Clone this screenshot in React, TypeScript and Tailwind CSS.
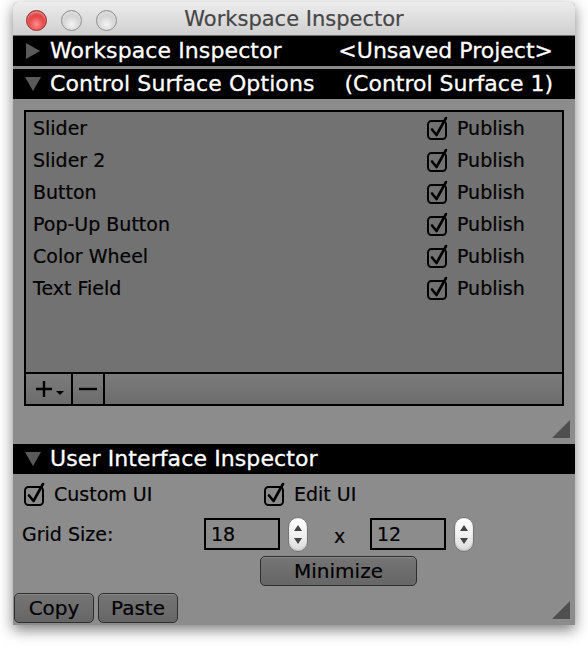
import React from 'react'

const FONT = { fontFamily: '"DejaVu Sans", Verdana, sans-serif' }

const ITEMS = ['Slider', 'Slider 2', 'Button', 'Pop-Up Button', 'Color Wheel', 'Text Field']

function CheckBox() {
    return (
        <svg width="22" height="25" viewBox="0 0 22 25" className="shrink-0">
            <rect x="1" y="5" width="18" height="18" rx="3.5" fill="none" stroke="#000" strokeWidth="2" />
            <path d="M5 13.5 L9.5 19 L19 2" fill="none" stroke="#000" strokeWidth="2.6" strokeLinecap="round" strokeLinejoin="round" />
        </svg>
    )
}

function Disclosure({ open }: { open: boolean }) {
    return open ? (
        <svg width="18" height="16" viewBox="0 0 18 16"><path d="M1 1 H17 L9 15 Z" fill="#5a5a5a" /></svg>
    ) : (
        <svg width="16" height="18" viewBox="0 0 16 18"><path d="M1 1 V17 L15 9 Z" fill="#5a5a5a" /></svg>
    )
}

function Header({ open, title, right }: { open: boolean; title: string; right?: string }) {
    return (
        <div className="h-[30px] bg-black flex items-center text-white text-[22px] leading-none pr-[22px] [-webkit-text-stroke:0.3px_white]">
            <div className="w-[37px] flex justify-center pl-[3px]">
                <Disclosure open={open} />
            </div>
            <span className="tracking-[0.1px]">{title}</span>
            {right && <span className="ml-auto">{right}</span>}
        </div>
    )
}

function ResizeGrip() {
    return (
        <svg width="18" height="18" viewBox="0 0 18 18"><path d="M18 0 V18 H0 Z" fill="#4f4f4f" /></svg>
    )
}

function Stepper() {
    return (
        <div className="ml-[8px] w-[20px] h-[35px] rounded-full border border-[#777] bg-gradient-to-b from-white via-[#f1f1f1] to-[#dcdcdc] flex flex-col items-center justify-between py-[7px] shadow-[inset_0_-1px_2px_rgba(0,0,0,0.15)]">
            <svg width="8" height="6" viewBox="0 0 8 6"><path d="M4 0 L8 6 H0 Z" fill="#444" /></svg>
            <svg width="8" height="6" viewBox="0 0 8 6"><path d="M0 0 H8 L4 6 Z" fill="#444" /></svg>
        </div>
    )
}

function Field({ value }: { value: string }) {
    return (
        <div className="w-[76px] h-[32px] border-2 border-black flex items-center pl-[5px] text-[19px] text-black">
            {value}
        </div>
    )
}

function Btn({ label, className }: { label: string; className: string }) {
    return (
        <div className={`h-[30px] rounded-[5px] border-[1.5px] border-[#2e2e2e] bg-gradient-to-b from-[#757575] to-[#666] flex items-center justify-center text-[20px] text-black shadow-[inset_0_1px_0_rgba(255,255,255,0.15)] ${className}`}>
            {label}
        </div>
    )
}

export default function App() {
    return (
        <div className="w-[588px] h-[646px] bg-white pt-[2px]" style={FONT}>
            <div className="ml-[13px] w-[562px] rounded-t-[5px] overflow-hidden bg-[#8c8c8c] shadow-[0_5px_14px_rgba(0,0,0,0.5)]">
                {/* Title bar */}
                <div className="h-[34px] relative flex items-center justify-center bg-gradient-to-b from-[#ededed] to-[#cfcfcf] border-b border-[#6d6d6d]">
                    <div className="absolute left-[13px] top-[8px] flex gap-[14px]">
                        <div className="w-[21px] h-[21px] rounded-full border border-[#9c2a2a] bg-[radial-gradient(circle_at_50%_70%,#ff8d8d,#e23b3b_55%,#b51c1c)] shadow-[inset_0_2px_3px_rgba(255,255,255,0.5)]" />
                        <div className="w-[21px] h-[21px] rounded-full border border-[#8e8e8e] bg-[radial-gradient(circle_at_50%_70%,#f4f4f4,#cfcfcf_60%,#a9a9a9)] shadow-[inset_0_2px_3px_rgba(255,255,255,0.6)]" />
                        <div className="w-[21px] h-[21px] rounded-full border border-[#8e8e8e] bg-[radial-gradient(circle_at_50%_70%,#f4f4f4,#cfcfcf_60%,#a9a9a9)] shadow-[inset_0_2px_3px_rgba(255,255,255,0.6)]" />
                    </div>
                    <span className="text-[21px] text-[#464646] leading-none pt-[2px] [-webkit-text-stroke:0.2px_#464646]">Workspace Inspector</span>
                </div>

                <Header open={false} title="Workspace Inspector" right="<Unsaved Project>" />
                <div className="h-[3px] bg-[#8a8a8a]" />
                <Header open={true} title="Control Surface Options" right="(Control Surface 1)" />

                {/* Control list */}
                <div className="pt-[11px] pl-[11px] pr-[11px]">
                    <div className="border-2 border-black bg-[#727272]">
                        <div className="h-[260px]">
                            {ITEMS.map(item => (
                                <div key={item} className="h-[32px] flex items-center pl-[7px] pr-[10px] text-[19px] text-black [-webkit-text-stroke:0.2px_black]">
                                    <span>{item}</span>
                                    <div className="ml-auto w-[125px] flex items-center gap-[8px]">
                                        <CheckBox />
                                        <span>Publish</span>
                                    </div>
                                </div>
                            ))}
                        </div>
                        <div className="h-[32px] border-t-2 border-black flex bg-gradient-to-b from-[#7c7c7c] to-[#6c6c6c]">
                            <div className="w-[47px] border-r-2 border-black flex items-center justify-center gap-[2px] text-black">
                                <svg width="20" height="20" viewBox="0 0 20 20"><path d="M10 2 V18 M2 10 H18" stroke="#000" strokeWidth="2.4" /></svg>
                                <svg width="8" height="14" viewBox="0 0 8 14"><path d="M0 9 H8 L4 13 Z" fill="#000" /></svg>
                            </div>
                            <div className="w-[32px] border-r-2 border-black flex items-center justify-center">
                                <svg width="20" height="4" viewBox="0 0 20 4"><path d="M1 2 H19" stroke="#000" strokeWidth="2.4" /></svg>
                            </div>
                        </div>
                    </div>
                </div>
                <div className="h-[38px] flex justify-end items-start pt-[14px] pr-[5px]">
                    <ResizeGrip />
                </div>

                <Header open={true} title="User Interface Inspector" />

                {/* User interface options */}
                <div className="text-[19px] text-black [-webkit-text-stroke:0.2px_black]">
                    <div className="h-[26px] mt-[7px] flex items-center pl-[11px]">
                        <div className="w-[240px] flex items-center gap-[8px]">
                            <CheckBox />
                            <span>Custom UI</span>
                        </div>
                        <div className="flex items-center gap-[8px]">
                            <CheckBox />
                            <span>Edit UI</span>
                        </div>
                    </div>
                    <div className="h-[36px] mt-[9px] flex items-center pl-[9px]">
                        <span className="w-[182px]">Grid Size:</span>
                        <Field value="18" />
                        <Stepper />
                        <span className="ml-[26px] w-[36px] pt-[4px]">x</span>
                        <Field value="12" />
                        <Stepper />
                    </div>
                    <div className="mt-[4px] flex pl-[247px]">
                        <Btn label="Minimize" className="w-[157px]" />
                    </div>
                    <div className="mt-[7px] h-[32px] flex items-start pl-[1px] pr-[5px] pb-[1px]">
                        <Btn label="Copy" className="w-[80px]" />
                        <Btn label="Paste" className="w-[80px] ml-[4px]" />
                        <div className="ml-auto pt-[8px]">
                            <ResizeGrip />
                        </div>
                    </div>
                </div>
            </div>
        </div>
    )
}
